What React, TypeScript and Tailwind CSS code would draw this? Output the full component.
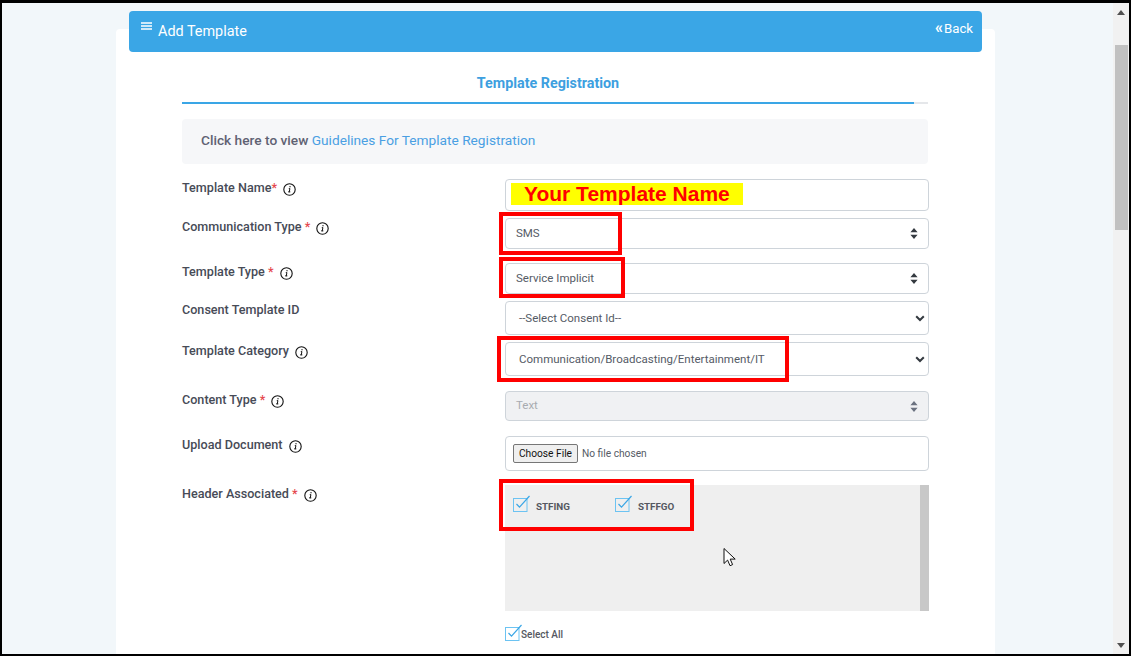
import type { ReactNode } from "react";

function InfoIcon() {
  return (
    <svg width="13" height="13" viewBox="0 0 13 13" className="shrink-0 mt-[2px]">
      <circle cx="6.5" cy="6.5" r="5.7" fill="none" stroke="#111" strokeWidth="1.1" />
      <path d="M7 3v1.3M5.8 5.6h1.1l-.6 3.2h-.8M5.5 8.9h1.8" fill="none" stroke="#111" strokeWidth="1" />
    </svg>
  );
}

function Stepper({ muted }: { muted?: boolean }) {
  return (
    <svg width="8" height="11" viewBox="0 0 8 11">
      <path d="M4 0l3.6 4.2H.4zM4 11L.4 6.8h7.2z" fill={muted ? "#6b7280" : "#343a40"} />
    </svg>
  );
}

function Chevron() {
  return (
    <svg width="10" height="7" viewBox="0 0 10 7">
      <path d="M1.2 1.2L5 5l3.8-3.8" fill="none" stroke="#343a40" strokeWidth="2" />
    </svg>
  );
}

function Check() {
  return (
    <svg width="18" height="18" viewBox="0 0 18 18" className="shrink-0">
      <rect x="0.5" y="3.5" width="13.5" height="13" fill="none" stroke="#6cc3f2" strokeWidth="1" />
      <path d="M3.5 9l3 3.2L16.5 1" fill="none" stroke="#3aa6e6" strokeWidth="1.2" />
    </svg>
  );
}

function Row({ label, star, top, height, children }: { label: string; star?: "tight" | "space"; top: string; height: string; children: ReactNode }) {
  return (
    <div className={`flex ${top} ${height}`}>
      <div className="w-[323px] shrink-0 flex items-center gap-[6px] h-[18px] text-[12.6px] font-medium text-[#474b57]">
        <span>
          {label}
          {star === "tight" && <span className="text-[#e5484d]">*</span>}
          {star === "space" && <span className="text-[#e5484d]"> *</span>}
        </span>
        {label !== "Consent Template ID" && <InfoIcon />}
      </div>
      <div className="w-[424px] shrink-0 relative">{children}</div>
    </div>
  );
}

function Select({ value, arrow, disabled, pad }: { value: string; arrow: "stepper" | "chevron"; disabled?: boolean; pad: string }) {
  return (
    <div className={`h-full flex items-center justify-between border border-[#ced4da] rounded text-[11.5px] ${pad} ${disabled ? "bg-[#f0f1f3] text-[#a8abb0]" : "bg-white text-[#555b66]"}`}>
      <span className={disabled ? "-mt-[1px]" : "mt-[1px]"}>{value}</span>
      {arrow === "stepper" ? <span className="flex"><Stepper muted={disabled} /></span> : <span className="flex mr-[-1px]"><Chevron /></span>}
    </div>
  );
}

function RedBox({ className }: { className: string }) {
  return <div className={`absolute border-[4px] border-[#ff0000] pointer-events-none ${className}`} />;
}

export default function App() {
  return (
    <div className="h-screen overflow-hidden flex bg-[#f2f7fa] border-l-2 border-r-2 border-b-2 border-t-[3px] border-black font-['Roboto',sans-serif]">
      <main className="flex-1 min-w-0 pl-[114px] pr-[118px] pt-[8px]">
        {/* Page header */}
        <div className="relative z-10 mx-[13px] h-[41px] rounded bg-[#3aa6e6] text-white flex justify-between pl-[12px] pr-[9px]">
          <div className="flex items-start pt-[11px] gap-[6px] text-[14.4px]">
            <svg width="11" height="10" viewBox="0 0 11 10">
              <path d="M0 1h11M0 4h11M0 7h11" stroke="#fff" strokeWidth="1.4" />
            </svg>
            <span className="leading-[20px]">Add Template</span>
          </div>
          <div className="flex items-start pt-[8px] gap-[1px] text-[13.2px] leading-[20px]">
            <span className="font-bold text-[16px] leading-[18px]">«</span>
            <span>Back</span>
          </div>
        </div>

        <div className="-mt-[23px] bg-white rounded-t pl-[66px] h-[700px]">
          <div className="w-[746px] pt-[44px]">
            <div className="text-center pr-[14px] text-[14.3px] leading-[20px] font-bold text-[#3d9fe0]">Template Registration</div>
            <div className="mt-[9px] flex h-[2px] bg-[#e5e7ea]">
              <div className="w-[732px] bg-[#3aa6e6]" />
            </div>
            <div className="mt-[15px] h-[45px] rounded-sm bg-[#f6f7f9] flex items-center pl-[19px] pb-[2px] text-[13.7px]">
              <span className="font-medium text-[#5f6273]">Click here to view&nbsp;</span>
              <span className="text-[#4a9fe3]">Guidelines For Template Registration</span>
            </div>

            <Row label="Template Name" star="tight" top="mt-[15px]" height="h-[32px]">
              <div className="h-full border border-[#ced4da] rounded bg-white pl-[5px] pt-[3px]">
                <div className="w-[232px] h-[22px] bg-[#ffff00] pl-[13px] font-['Liberation_Sans',sans-serif] font-bold text-[21px] leading-[22px] text-[#ff0000]">
                  Your Template Name
                </div>
              </div>
            </Row>

            <Row label="Communication Type" star="space" top="mt-[7px]" height="h-[31px]">
              <Select value="SMS" arrow="stepper" pad="pl-[10px] pr-[10px]" />
              <RedBox className="left-[-6px] top-[-6px] w-[123px] h-[43px]" />
            </Row>

            <Row label="Template Type" star="space" top="mt-[14px]" height="h-[31px]">
              <Select value="Service Implicit" arrow="stepper" pad="pl-[10px] pr-[10px]" />
              <RedBox className="left-[-6px] top-[-6px] w-[126px] h-[41px]" />
            </Row>

            <Row label="Consent Template ID" top="mt-[7px]" height="h-[34px]">
              <Select value="--Select Consent Id--" arrow="chevron" pad="pl-[13px] pr-[4px]" />
            </Row>

            <Row label="Template Category" top="mt-[7px]" height="h-[34px]">
              <Select value="Communication/Broadcasting/Entertainment/IT" arrow="chevron" pad="pl-[13px] pr-[4px]" />
              <RedBox className="left-[-8px] top-[-6px] w-[292px] h-[46px]" />
            </Row>

            <Row label="Content Type" star="space" top="mt-[15px]" height="h-[30px]">
              <Select value="Text" arrow="stepper" disabled pad="pl-[10px] pr-[10px]" />
            </Row>

            <Row label="Upload Document" top="mt-[15px]" height="h-[35px]">
              <div className="h-full border border-[#ced4da] rounded bg-white flex items-center pl-[7px] text-[10.2px] text-[#555b66]">
                <button className="h-[19px] w-[65px] border border-[#767676] rounded-[2px] bg-[#efefef] text-[#111]">Choose File</button>
                <span className="ml-[4px]">No file chosen</span>
              </div>
            </Row>

            <Row label="Header Associated" star="space" top="mt-[14px]" height="h-[126px]">
              <div className="h-full bg-[#efefef] flex justify-between">
                <div className="flex items-start pl-[8px] pt-[9px] text-[9.8px] font-bold text-[#555861]">
                  <div className="flex items-center w-[102px]">
                    <Check />
                    <span className="ml-[5px] mt-[6px]">STFING</span>
                  </div>
                  <div className="flex items-center">
                    <Check />
                    <span className="ml-[5px] mt-[6px]">STFFGO</span>
                  </div>
                </div>
                <div className="w-[9px] bg-[#c8c8c8]" />
              </div>
              <RedBox className="left-[-6px] top-[-6px] w-[195px] h-[52px]" />
              {/* captured mouse pointer */}
              <svg width="14" height="21" viewBox="0 0 14 20" className="absolute left-[218px] top-[62px]">
                <path d="M1 1v15l3.6-3.4 2.4 5.6 2.6-1.1-2.4-5.5h5z" fill="#fff" stroke="#111" strokeWidth="1" />
              </svg>
              <div className="mt-[13px] flex items-center text-[10px] font-medium text-[#555861]">
                <Check />
                <span className="mt-[3px] -ml-[2px]">Select All</span>
              </div>
            </Row>
          </div>
        </div>
      </main>

      {/* Window scrollbar */}
      <aside className="w-[16px] shrink-0 bg-[#f1f1f1] flex flex-col items-center justify-between">
        <div className="w-full flex flex-col items-center">
          <svg width="8" height="5" viewBox="0 0 8 5" className="mt-[7px]"><path d="M4 0l4 5H0z" fill="#505050" /></svg>
          <div className="mt-[30px] w-[13px] h-[185px] bg-[#c1c1c1]" />
        </div>
        <svg width="8" height="5" viewBox="0 0 8 5" className="mb-[6px]"><path d="M4 5l4-5H0z" fill="#505050" /></svg>
      </aside>
    </div>
  );
}
